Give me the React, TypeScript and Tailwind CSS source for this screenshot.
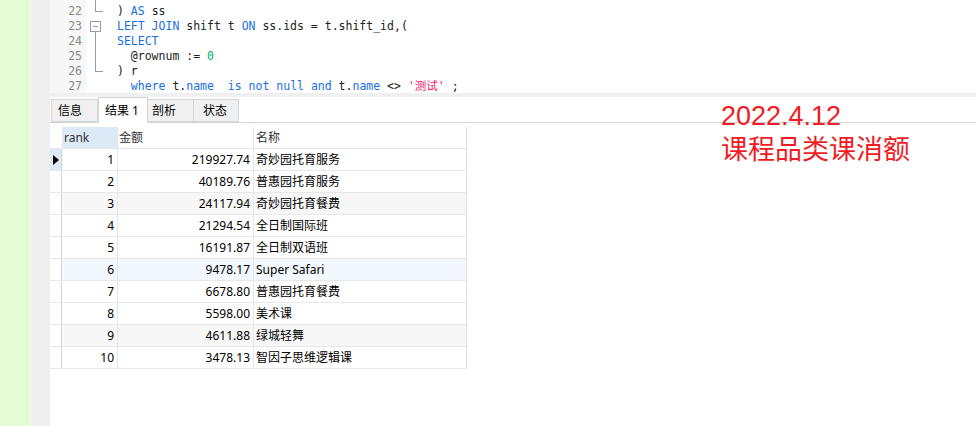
const mono = { fontFamily: '"DejaVu Sans Mono", "Noto Sans CJK SC", monospace' };

const K = ({ children }: { children: React.ReactNode }) => (
  <span className="text-[#1a6fe0]">{children}</span>
);

const rows = [
  ["1", "219927.74", "奇妙园托育服务"],
  ["2", "40189.76", "普惠园托育服务"],
  ["3", "24117.94", "奇妙园托育餐费"],
  ["4", "21294.54", "全日制国际班"],
  ["5", "16191.87", "全日制双语班"],
  ["6", "9478.17", "Super Safari"],
  ["7", "6678.80", "普惠园托育餐费"],
  ["8", "5598.00", "美术课"],
  ["9", "4611.88", "绿城轻舞"],
  ["10", "3478.13", "智因子思维逻辑课"],
];

function rowBg(i: number) {
  if (i === 2 || i === 8) return "bg-[#f7f7f7]";
  if (i === 5) return "bg-[#f2f8fd]";
  return "bg-white";
}

function Editor() {
  return (
    <div className="flex h-[93px] bg-white">
      <div className="w-[36px] bg-[#f7f7f7] pt-[4px] text-right pr-[4px] text-[#8a8a8a] text-[11.5px] leading-[15px]" style={mono}>
        {[22, 23, 24, 25, 26, 27].map((n) => (
          <div key={n}>{n}</div>
        ))}
      </div>
      {/* fold markers */}
      <svg width="31" height="93" className="shrink-0">
        <g stroke="#9a9a9a" strokeWidth="1" fill="none" shapeRendering="crispEdges">
          <path d="M9.5 0 V11.5 H17" />
          <rect x="4.5" y="21.5" width="10" height="10" fill="#fff" />
          <path d="M7 26.5 H12" />
          <path d="M9.5 31.5 V71.5 H17" />
        </g>
      </svg>
      <div className="pt-[4px] text-[11.5px] leading-[15px] text-[#222] whitespace-pre" style={mono}>
        <div>) <K>AS</K> ss</div>
        <div><K>LEFT JOIN</K> shift t <K>ON</K> ss.ids = t.shift_id,(</div>
        <div><K>SELECT</K></div>
        <div>  @rownum := <span className="text-[#00b060]">0</span></div>
        <div>) r</div>
        <div>  <K>where</K> t.<K>name</K>  <K>is not null and</K> t.<K>name</K> &lt;&gt; <span className="text-[#f0206a]">'测试'</span> ;</div>
      </div>
    </div>
  );
}

function Tabs() {
  const inactive = "h-[23px] mt-[2px] border border-[#d6d6d6] bg-[#f0f0f0] flex items-center";
  return (
    <div className="flex h-[26px] border-b border-[#d4d4d4] bg-white pl-[1px]">
      <div className={`${inactive} w-[47px] pl-[6px]`}>信息</div>
      <div className="h-[26px] w-[50px] border border-b-0 border-[#d6d6d6] bg-white flex items-center pl-[6px] -mb-px">结果 1</div>
      <div className={`${inactive} w-[46px] pl-[4px] border-l-0`}>剖析</div>
      <div className={`${inactive} w-[45px] pl-[9px] border-l-0`}>状态</div>
    </div>
  );
}

function Grid() {
  return (
    <div className="mt-[4px] w-[417px] border-r border-[#e0e0e0] text-[12px] text-black">
      <div className="flex h-[22px] border-b border-[#e6e6e6]">
        <div className="w-[12px] bg-white" />
        <div className="w-[56px] bg-[#dce9f7] border-r border-[#e6e6e6] pl-[2px] flex items-center text-[#333]">rank</div>
        <div className="w-[136px] bg-white border-r border-[#e6e6e6] pl-[1px] flex items-center text-[#333]">金额</div>
        <div className="flex-1 bg-white pl-[2px] flex items-center text-[#333]">名称</div>
      </div>
      {rows.map((r, i) => (
        <div key={r[0]} className={`flex h-[22px] border-b border-[#e8e8e8] ${rowBg(i)}`}>
          <div className={`w-[12px] border-r border-[#d4d4d4] flex items-center pl-[3px] ${i === 0 ? "bg-[#dce9f7]" : "bg-white"}`}>
            {i === 0 && (
              <svg width="6" height="10" viewBox="0 0 6 10">
                <path d="M0 0 L6 5 L0 10 Z" fill="#000" />
              </svg>
            )}
          </div>
          <div className="w-[56px] border-r border-[#e6e6e6] flex items-center justify-end pr-[3px]">{r[0]}</div>
          <div className="w-[136px] border-r border-[#e6e6e6] flex items-center justify-end pr-[3px]">{r[1]}</div>
          <div className="flex-1 flex items-center pl-[2px]">{r[2]}</div>
        </div>
      ))}
    </div>
  );
}

export default function App() {
  return (
    <div
      className="relative flex w-[976px] h-[426px] overflow-hidden bg-white text-[12px]"
      style={{ fontFamily: '"Noto Sans", "Noto Sans CJK SC", sans-serif' }}
    >
      <div className="w-[31px] bg-[#e4fcd3] border-r border-[#f4fff0]" />
      <div className="w-[19px] bg-[#efefef]" />
      <div className="flex-1 flex flex-col">
        <Editor />
        <div className="h-[4px] bg-[#f0f0f0]" />
        <Tabs />
        <Grid />
      </div>
      <div
        className="absolute left-[721px] top-[99px] text-[#ee1c25] text-[27px] leading-[34px]"
        style={{ fontFamily: '"Liberation Sans", "Noto Sans CJK SC", sans-serif' }}
      >
        <div>2022.4.12</div>
        <div>课程品类课消额</div>
      </div>
    </div>
  );
}
